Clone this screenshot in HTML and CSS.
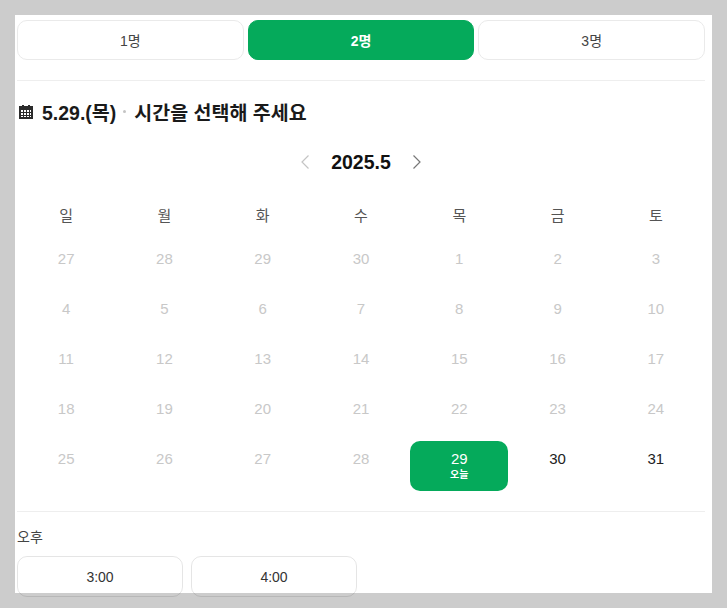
FILE: index.html
```html
<!DOCTYPE html>
<html lang="ko">
<head>
<meta charset="utf-8">
<title>예약</title>
<link rel="stylesheet" href="styles.css">
</head>
<body>
<main class="panel">
  <div class="party">
    <button class="party-btn">1명</button>
    <button class="party-btn is-active">2명</button>
    <button class="party-btn">3명</button>
  </div>
  <hr class="rule rule-top">
  <h2 class="title">
    <svg class="cal-icon" width="14" height="14" viewBox="0 0 14 14" aria-hidden="true">
      <path fill="#2b2b2b" d="M3 0h2v1h4V0h2v1h3v13H0V1h3z"/>
      <path fill="#fff" d="M2 5h2v2H2zM5 5h2v2H5zM8 5h2v2H8zM11 5h1v2h-1zM2 8h2v2H2zM5 8h2v2H5zM8 8h2v2H8zM11 8h1v2h-1zM2 11h2v1H2zM5 11h2v1H5zM8 11h2v1H8zM11 11h1v1h-1z"/>
    </svg>
    <span>5.29.(목)</span><span class="dot"></span><span>시간을 선택해 주세요</span>
  </h2>
  <div class="month">
    <svg class="chev" width="8" height="14" viewBox="0 0 8 14" aria-hidden="true"><path d="M7.500 0.500 1 7l6.500 6.500" fill="none" stroke="#c4c4c4" stroke-width="1.200"/></svg>
    <strong class="month-label">2025.5</strong>
    <svg class="chev" width="8" height="14" viewBox="0 0 8 14" aria-hidden="true"><path d="M0.500 0.500 7 7l-6.500 6.500" fill="none" stroke="#777" stroke-width="1.200"/></svg>
  </div>
  <div class="weekdays">
    <span>일</span><span>월</span><span>화</span><span>수</span><span>목</span><span>금</span><span>토</span>
  </div>
  <div class="days">
    <div class="day off">27</div><div class="day off">28</div><div class="day off">29</div><div class="day off">30</div><div class="day off">1</div><div class="day off">2</div><div class="day off">3</div>
    <div class="day off">4</div><div class="day off">5</div><div class="day off">6</div><div class="day off">7</div><div class="day off">8</div><div class="day off">9</div><div class="day off">10</div>
    <div class="day off">11</div><div class="day off">12</div><div class="day off">13</div><div class="day off">14</div><div class="day off">15</div><div class="day off">16</div><div class="day off">17</div>
    <div class="day off">18</div><div class="day off">19</div><div class="day off">20</div><div class="day off">21</div><div class="day off">22</div><div class="day off">23</div><div class="day off">24</div>
    <div class="day off">25</div><div class="day off">26</div><div class="day off">27</div><div class="day off">28</div>
    <div class="day today">29<small class="today-tag">오늘</small></div>
    <div class="day">30</div><div class="day">31</div>
  </div>
  <hr class="rule rule-bottom">
  <p class="period">오후</p>
  <div class="times">
    <button class="time-btn">3:00</button>
    <button class="time-btn">4:00</button>
  </div>
</main>
</body>
</html>
```
FILE: styles.css
```css
* { box-sizing: border-box; }
html, body { margin: 0; height: 608px; overflow: hidden; }
body {
  background: #cccccc;
  font-family: "Liberation Sans", "Noto Sans CJK KR", sans-serif;
  color: #222;
}
.panel {
  width: 697px;
  height: 578px;
  margin: 15px 0 0 15px;
  padding: 5px 7px 0 2px;
  background: #fff;
}
.party { display: flex; gap: 4px; }
.party-btn {
  flex: 1;
  height: 40px;
  border: 1px solid #eaeaea;
  border-radius: 10px;
  background: #fff;
  color: #444;
  font: 14px "Liberation Sans", "Noto Sans CJK KR", sans-serif;
  padding: 0 0 1px;
}
.party-btn.is-active {
  background: #05aa5b;
  border-color: #05aa5b;
  color: #fff;
  font-weight: 700;
}
.rule { border: 0; border-top: 1px solid #eeeeee; margin: 0; }
.rule-top { margin-top: 20px; }
.title {
  display: flex;
  align-items: center;
  height: 24px;
  margin: 18px 0 0;
  font-size: 19.500px;
  font-weight: 700;
  color: #1a1a1a;
}
.cal-icon { margin: 1px 9px 0 2px; }
.dot {
  width: 3px;
  height: 3px;
  margin: 1px 8px 0 7px;
  border-radius: 50%;
  background: #c4c4c4;
}
.month {
  display: flex;
  justify-content: center;
  align-items: center;
  gap: 22px;
  height: 26px;
  margin-top: 26px;
}
.month-label { font-size: 19.500px; color: #111; }
.weekdays, .days { display: grid; grid-template-columns: repeat(7, 1fr); }
.weekdays {
  margin-top: 32px;
  height: 18px;
  line-height: 18px;
  text-align: center;
  font-size: 15px;
  color: #555;
}
.days { margin-top: 16px; grid-auto-rows: 50px; }
.day {
  display: flex;
  flex-direction: column;
  align-items: center;
  padding-top: 8px;
  font-size: 15px;
  line-height: 19px;
  color: #222;
}
.day.off { color: #c8c8c8; }
.day.today {
  background: #05aa5b;
  border-radius: 10px;
  color: #fff;
}
.today-tag { font-size: 10px; line-height: 14px; font-weight: 700; }
.rule-bottom { margin-top: 20px; }
.period { margin: 16px 0 0; font-size: 14px; line-height: 18px; color: #444; }
.times { display: flex; gap: 8px; margin-top: 10px; }
.time-btn {
  width: 166px;
  height: 41px;
  border: 1px solid rgba(0, 0, 0, 0.1);
  border-radius: 10px;
  background: transparent;
  color: #333;
  font: 14px "Liberation Sans", "Noto Sans CJK KR", sans-serif;
  padding: 0;
}
```
